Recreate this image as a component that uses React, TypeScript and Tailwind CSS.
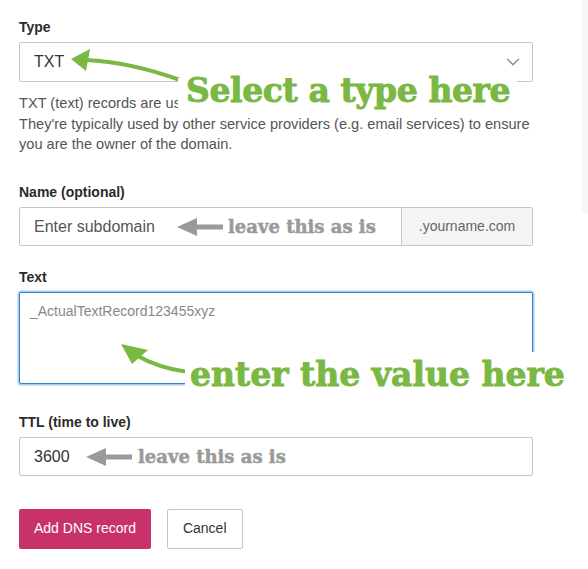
import { ChevronDown } from 'lucide-react';

const slab = "font-['DejaVu_Serif',serif] font-bold";

function Label({ children }: { children: React.ReactNode }) {
  return <div className="text-[14px] leading-[16px] font-bold text-[#2b2b2b] mb-[7px]">{children}</div>;
}

function GrayArrow({ className }: { className: string }) {
  return (
    <svg className={className} width="46" height="20" viewBox="0 0 46 20">
      <path d="M0 10 L20 1 L20 19 Z" fill="#9a9a9a" />
      <rect x="18" y="7.5" width="28" height="5" fill="#9a9a9a" />
    </svg>
  );
}

export default function App() {
  return (
    <div className="relative w-[588px] h-[569px] bg-white overflow-hidden flex font-['Liberation_Sans',Arial,sans-serif]">
      <div className="w-[582px] pl-[19px] pr-[49px] pt-[19px]">
        {/* Type */}
        <Label>Type</Label>
        <div className="h-[40px] border border-[#c6c6c6] rounded-[2px] flex items-center justify-between pl-[14px] pr-[8px]">
          <span className="text-[16px] text-[#333]">TXT</span>
          <ChevronDown className="w-[22px] h-[22px] text-[#8a8a8a]" strokeWidth={1.4} />
        </div>
        <p className="mt-[11px] text-[14.6px] leading-[20.5px] text-[#555]">
          TXT (text) records are us
          <br />
          They're typically used by other service providers (e.g. email services) to ensure you are the owner of the domain.
        </p>

        {/* Name */}
        <div className="mt-[29px]">
          <Label>Name (optional)</Label>
          <div className="h-[39px] flex border border-[#c6c6c6] rounded-[2px]">
            <div className="flex-1 flex items-center pl-[14px] pt-[2px] text-[16px] text-[#555]">Enter subdomain</div>
            <div className="w-[131px] border-l border-[#c6c6c6] bg-[#f4f4f4] flex items-center justify-center text-[14px] text-[#666]">
              .yourname.com
            </div>
          </div>
        </div>

        {/* Text */}
        <div className="mt-[23px]">
          <Label>Text</Label>
          <div className="h-[92px] border border-[#2f7fd2] rounded-[2px] shadow-[0_0_0_1.5px_#a8cff3] pl-[10px] pt-[8px] text-[14px] text-[#888]">
            _ActualTextRecord123455xyz
          </div>
        </div>

        {/* TTL */}
        <div className="mt-[30px]">
          <Label>TTL (time to live)</Label>
          <div className="h-[39px] border border-[#c6c6c6] rounded-[2px] flex items-center pl-[14px] pt-[1px] text-[16px] text-[#333]">
            3600
          </div>
        </div>

        <div className="mt-[33px] flex gap-[16px]">
          <button className="h-[40px] px-[15px] bg-[#c9316b] rounded-[2px] text-white text-[14px]">Add DNS record</button>
          <button className="h-[40px] px-[15px] bg-white border border-[#c6c6c6] rounded-[2px] text-[#333] text-[14px]">Cancel</button>
        </div>
      </div>
      <div className="w-[6px] h-[213px] bg-[#f5f6f7]" />

      {/* annotation: select a type */}
      <svg className="absolute left-0 top-0 pointer-events-none" width="588" height="569" viewBox="0 0 588 569">
        <path d="M86 60 Q130 62 180 80" stroke="#79b843" strokeWidth="4" fill="none" />
        <path d="M71 59 L90 49 L86 71 Z" fill="#79b843" />
      </svg>
      <div className={`absolute left-[178px] top-[78px] w-[339px] h-[33px] bg-white pl-[8px] text-[33px] leading-[25px] tracking-[-0.4px] text-[#79b843] whitespace-nowrap [-webkit-text-stroke:0.9px_#79b843] ${slab}`}>
        Select a type here
      </div>

      {/* annotation: leave this as is (name) */}
      <GrayArrow className="absolute left-[177px] top-[217px]" />
      <div className={`absolute left-[228px] top-[215px] text-[18px] leading-[24px] text-[#9a9a9a] whitespace-nowrap [-webkit-text-stroke:0.5px_#9a9a9a] ${slab}`}>
        leave this as is
      </div>

      {/* annotation: enter the value */}
      <svg className="absolute left-0 top-0 pointer-events-none" width="588" height="569" viewBox="0 0 588 569">
        <path d="M136 355 Q158 368 188 372" stroke="#79b843" strokeWidth="4" fill="none" />
        <path d="M121 344 L148 350 L132 364 Z" fill="#79b843" />
      </svg>
      <div className={`absolute left-[185px] top-[352px] w-[403px] h-[43px] bg-white pl-[5px] pt-[6px] text-[33px] leading-[33px] text-[#79b843] whitespace-nowrap [-webkit-text-stroke:0.9px_#79b843] ${slab}`}>
        enter the value here
      </div>

      {/* annotation: leave this as is (ttl) */}
      <GrayArrow className="absolute left-[86px] top-[447px]" />
      <div className={`absolute left-[138px] top-[445px] text-[18px] leading-[24px] text-[#9a9a9a] whitespace-nowrap [-webkit-text-stroke:0.5px_#9a9a9a] ${slab}`}>
        leave this as is
      </div>
    </div>
  );
}
